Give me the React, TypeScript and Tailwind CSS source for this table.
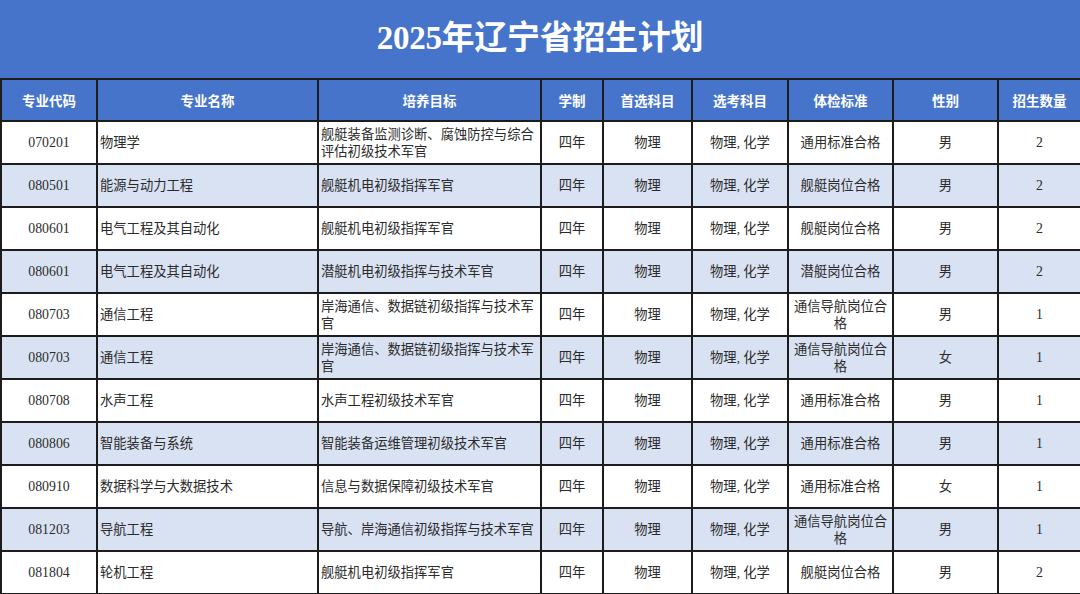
import React from "react"

type Row = {
  code: string
  name: string
  goal: string
  years: string
  first: string
  optional: string
  physical: string
  gender: string
  count: string
}

const rows: Row[] = [
  { code: "070201", name: "物理学", goal: "舰艇装备监测诊断、腐蚀防控与综合评估初级技术军官", years: "四年", first: "物理", optional: "物理, 化学", physical: "通用标准合格", gender: "男", count: "2" },
  { code: "080501", name: "能源与动力工程", goal: "舰艇机电初级指挥军官", years: "四年", first: "物理", optional: "物理, 化学", physical: "舰艇岗位合格", gender: "男", count: "2" },
  { code: "080601", name: "电气工程及其自动化", goal: "舰艇机电初级指挥军官", years: "四年", first: "物理", optional: "物理, 化学", physical: "舰艇岗位合格", gender: "男", count: "2" },
  { code: "080601", name: "电气工程及其自动化", goal: "潜艇机电初级指挥与技术军官", years: "四年", first: "物理", optional: "物理, 化学", physical: "潜艇岗位合格", gender: "男", count: "2" },
  { code: "080703", name: "通信工程", goal: "岸海通信、数据链初级指挥与技术军官", years: "四年", first: "物理", optional: "物理, 化学", physical: "通信导航岗位合格", gender: "男", count: "1" },
  { code: "080703", name: "通信工程", goal: "岸海通信、数据链初级指挥与技术军官", years: "四年", first: "物理", optional: "物理, 化学", physical: "通信导航岗位合格", gender: "女", count: "1" },
  { code: "080708", name: "水声工程", goal: "水声工程初级技术军官", years: "四年", first: "物理", optional: "物理, 化学", physical: "通用标准合格", gender: "男", count: "1" },
  { code: "080806", name: "智能装备与系统", goal: "智能装备运维管理初级技术军官", years: "四年", first: "物理", optional: "物理, 化学", physical: "通用标准合格", gender: "男", count: "1" },
  { code: "080910", name: "数据科学与大数据技术", goal: "信息与数据保障初级技术军官", years: "四年", first: "物理", optional: "物理, 化学", physical: "通用标准合格", gender: "女", count: "1" },
  { code: "081203", name: "导航工程", goal: "导航、岸海通信初级指挥与技术军官", years: "四年", first: "物理", optional: "物理, 化学", physical: "通信导航岗位合格", gender: "男", count: "1" },
  { code: "081804", name: "轮机工程", goal: "舰艇机电初级指挥军官", years: "四年", first: "物理", optional: "物理, 化学", physical: "舰艇岗位合格", gender: "男", count: "2" },
]

const headers = ["专业代码", "专业名称", "培养目标", "学制", "首选科目", "选考科目", "体检标准", "性别", "招生数量"]
const widths = [96, 221, 223, 62, 89, 96, 105, 105, 83]

const cell = "border-2 border-[#1c1c1c] px-[2px] leading-[17px]"

export default function App() {
  return (
    <div className="w-[1080px] h-[594px] overflow-hidden bg-white">
      {/* Title */}
      <div className="h-[78px] bg-[#4674cb] flex items-center justify-center">
        <h1 className="text-white text-[33px] font-bold tracking-[-0.3px] font-['Liberation_Serif','Noto_Sans_CJK_SC',serif]">
          2025年辽宁省招生计划
        </h1>
      </div>

      <table className="w-[1080px] table-fixed border-collapse text-[13.3px] text-[#2b2b2b] font-['Liberation_Serif','Noto_Sans_CJK_SC',serif]">
        <colgroup>
          {widths.map((w, i) => (
            <col key={i} style={{ width: w }} />
          ))}
        </colgroup>
        <thead>
          <tr className="h-[42px] bg-[#4674cb]">
            {headers.map((h) => (
              <th
                key={h}
                className={`${cell} text-white text-[13.5px] font-bold text-center font-['Noto_Sans_CJK_SC',sans-serif]`}
              >
                {h}
              </th>
            ))}
          </tr>
        </thead>
        <tbody>
          {rows.map((r, i) => (
            <tr key={i} className={i % 2 === 1 ? "h-[43px] bg-[#d9e2f3]" : "h-[43px] bg-white"}>
              <td className={`${cell} text-center text-[13.8px]`}>{r.code}</td>
              <td className={`${cell} text-left`}>{r.name}</td>
              <td className={`${cell} text-left`}>{r.goal}</td>
              <td className={`${cell} text-center`}>{r.years}</td>
              <td className={`${cell} text-center`}>{r.first}</td>
              <td className={`${cell} text-center`}>{r.optional}</td>
              <td className={`${cell} text-center`}>{r.physical}</td>
              <td className={`${cell} text-center`}>{r.gender}</td>
              <td className={`${cell} text-center text-[13.8px]`}>{r.count}</td>
            </tr>
          ))}
        </tbody>
      </table>
    </div>
  )
}
